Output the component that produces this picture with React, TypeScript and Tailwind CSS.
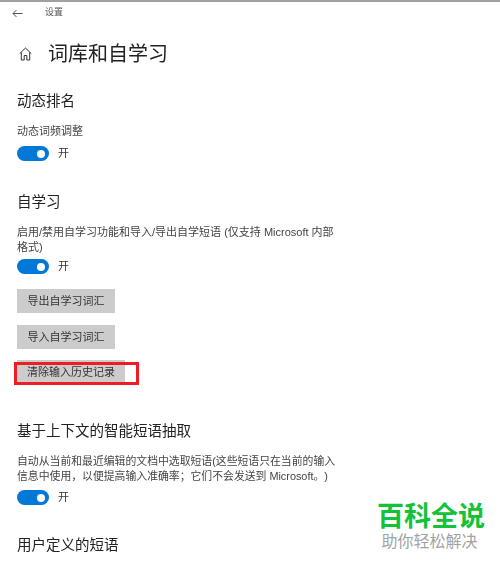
import React from "react";

const font = { fontFamily: '"Liberation Sans", "Noto Sans CJK SC", sans-serif' };

function Toggle({ className = "" }: { className?: string }) {
  return (
    <div className={`flex items-center h-[15px] ${className}`}>
      <div className="w-[32px] h-[15px] rounded-full bg-[#0078d7] flex items-center justify-end pr-[4px]">
        <div className="w-[8px] h-[8px] rounded-full bg-white" />
      </div>
      <span className="ml-[9px] text-[11px] leading-[15px] text-[#333]">开</span>
    </div>
  );
}

function H2({ children, className = "" }: { children: React.ReactNode; className?: string }) {
  return <div className={`text-[14.5px] leading-[20px] text-[#222] ${className}`}>{children}</div>;
}

function Btn({ children, className = "" }: { children: React.ReactNode; className?: string }) {
  return (
    <div className={`h-[24px] bg-[#cccccc] flex items-center justify-center text-[11px] text-[#333] ${className}`}>
      {children}
    </div>
  );
}

export default function App() {
  return (
    <div style={font} className="relative w-[500px] h-[562px] overflow-hidden bg-white">
      <div className="blur-[0.35px]">
        <div className="h-[2px] bg-[#a0a0a0]" />
        <div className="flex items-center h-[22px] pl-[12px]">
          <svg width="11" height="9" viewBox="0 0 11 9" fill="none" stroke="#555" strokeWidth="1">
            <path d="M10.5 4.5H1M4.5 1L1 4.5L4.5 8" />
          </svg>
          <span className="ml-[22px] text-[9px] text-[#555]">设置</span>
        </div>
        <div className="flex items-center mt-[18px] h-[24px] pl-[19px]">
          <svg width="13" height="14" viewBox="0 0 13 14" fill="none" stroke="#333" strokeWidth="1">
            <path d="M0.7 6.6L6.5 1L12.3 6.6M2.3 5.4V13H5.2V8.5H7.8V13H10.7V5.4" />
          </svg>
          <span className="ml-[16px] text-[20px] leading-[24px] text-[#222]">词库和自学习</span>
        </div>
        <div className="pl-[17px]">
          <H2 className="mt-[25px]">动态排名</H2>
          <div className="mt-[13px] text-[11px] leading-[15px] text-[#444]">动态词频调整</div>
          <Toggle className="mt-[7px]" />

          <H2 className="mt-[31px]">自学习</H2>
          <div className="mt-[13px] w-[322px] text-[11px] leading-[15px] text-[#444]">
            启用/禁用自学习功能和导入/导出自学短语 (仅支持 Microsoft 内部格式)
          </div>
          <Toggle className="mt-[4px]" />
          <Btn className="mt-[15px] w-[98px]">导出自学习词汇</Btn>
          <Btn className="mt-[12px] w-[98px]">导入自学习词汇</Btn>
          <Btn className="mt-[11px] w-[108px]">清除输入历史记录</Btn>

          <H2 className="mt-[37px]">基于上下文的智能短语抽取</H2>
          <div className="mt-[13px] text-[10.85px] leading-[15px] text-[#444] whitespace-nowrap [text-spacing-trim:space-all]">
            自动从当前和最近编辑的文档中选取短语(这些短语只在当前的输入
            <br />
            信息中使用，以便提高输入准确率；它们不会发送到 Microsoft。)
          </div>
          <Toggle className="mt-[6px]" />
          <H2 className="mt-[30px]">用户定义的短语</H2>
        </div>
      </div>

      <div className="absolute left-[14px] top-[362px] w-[125px] h-[23px] border-[3px] border-[#ee1c25]" />

      <div className="absolute left-[376px] top-[502px] w-[110px] flex flex-col items-center">
        <div className="text-[27px] leading-[30px] font-bold text-[#12c338] whitespace-nowrap">百科全说</div>
        <div className="text-[16px] leading-[18px] mt-[1px] mr-[3px] text-[#a3a3a3] whitespace-nowrap">助你轻松解决</div>
      </div>
    </div>
  );
}
